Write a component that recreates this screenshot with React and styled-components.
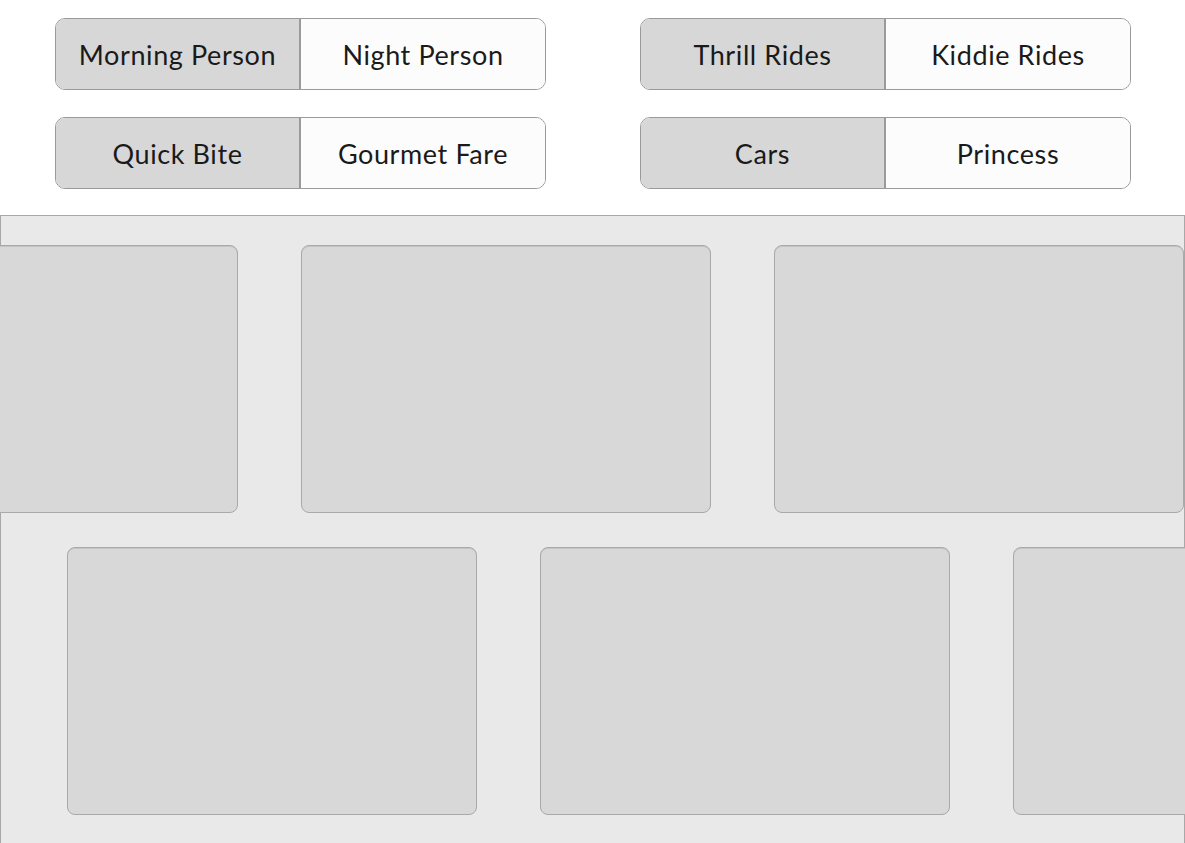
import styled, { createGlobalStyle } from "styled-components";

const GlobalStyle = createGlobalStyle`
  html, body {
    margin: 0;
    padding: 0;
    overflow: hidden;
    background: #ffffff;
    font-family: Lato, "Open Sans", sans-serif;
  }
`;

const Page = styled.div`
  width: 1185px;
  height: 843px;
  overflow: hidden;
`;

const ToggleArea = styled.div`
  display: grid;
  grid-template-columns: 491px 491px;
  column-gap: 94px;
  row-gap: 27px;
  padding: 18px 0 0 55px;
`;

const Toggle = styled.div`
  display: grid;
  grid-template-columns: 245px 1fr;
  height: 72px;
  box-sizing: border-box;
  border: 1px solid #9a9a9a;
  border-radius: 10px;
  overflow: hidden;
`;

const Option = styled.div`
  display: flex;
  align-items: center;
  justify-content: center;
  font-size: 27px;
  font-weight: 400;
  letter-spacing: 0.6px;
  color: #1a1a1a;
  background: ${(p) => (p.$active ? "#d7d7d7" : "#fcfcfc")};
  border-right: ${(p) => (p.$active ? "2px solid #9a9a9a" : "none")};
`;

const Board = styled.div`
  margin-top: 26px;
  width: 1185px;
  height: 640px;
  box-sizing: border-box;
  border: 1px solid #a8a8a8;
  background: #e9e9e9;
  padding-top: 29px;
  display: flex;
  flex-direction: column;
  gap: 34px;
`;

const CardRow = styled.div`
  display: flex;
  gap: 63px;
  margin-left: ${(p) => p.$offset}px;
`;

const Card = styled.div`
  flex: 0 0 410px;
  height: 268px;
  box-sizing: border-box;
  background: #d8d8d8;
  border: 1px solid #a9a9a9;
  border-radius: 8px;
  box-shadow: inset 0 1px 0 #c4c4c4;
`;

const toggles = [
  ["Morning Person", "Night Person"],
  ["Thrill Rides", "Kiddie Rides"],
  ["Quick Bite", "Gourmet Fare"],
  ["Cars", "Princess"],
];

const App = () => {
  return (
    <Page>
      <GlobalStyle />
      <ToggleArea>
        {toggles.map(([a, b]) => (
          <Toggle key={a}>
            <Option $active>{a}</Option>
            <Option>{b}</Option>
          </Toggle>
        ))}
      </ToggleArea>
      <Board>
        <CardRow $offset={-173}>
          <Card />
          <Card />
          <Card />
        </CardRow>
        <CardRow $offset={66}>
          <Card />
          <Card />
          <Card />
        </CardRow>
      </Board>
    </Page>
  );
};

export default App;
